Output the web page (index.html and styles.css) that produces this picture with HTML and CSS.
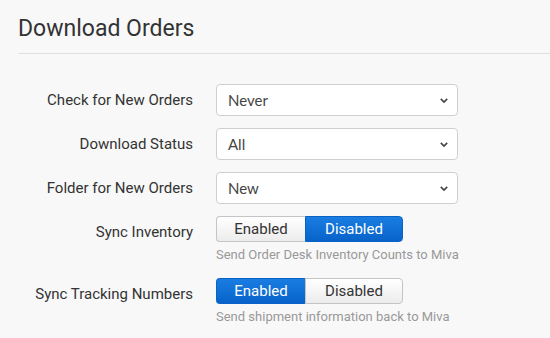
FILE: index.html
```html
<!DOCTYPE html>
<html lang="en">
<head>
<meta charset="UTF-8">
<title>Download Orders</title>
<link rel="stylesheet" href="styles.css">
</head>
<body>
<div class="panel">
	<h2 class="panel-title">Download Orders</h2>

	<div class="form-row">
		<label class="form-label">Check for New Orders</label>
		<div class="form-control">
			<div class="select-box"><span>Never</span><svg class="chevron" viewBox="0 0 10 6"><path d="M1 1l4 4 4-4" /></svg></div>
		</div>
	</div>

	<div class="form-row">
		<label class="form-label">Download Status</label>
		<div class="form-control">
			<div class="select-box"><span>All</span><svg class="chevron" viewBox="0 0 10 6"><path d="M1 1l4 4 4-4" /></svg></div>
		</div>
	</div>

	<div class="form-row">
		<label class="form-label">Folder for New Orders</label>
		<div class="form-control">
			<div class="select-box"><span>New</span><svg class="chevron" viewBox="0 0 10 6"><path d="M1 1l4 4 4-4" /></svg></div>
		</div>
	</div>

	<div class="form-row toggle-row">
		<label class="form-label">Sync Inventory</label>
		<div class="form-control">
			<div class="btn-group">
				<button class="btn">Enabled</button>
				<button class="btn active">Disabled</button>
			</div>
			<p class="help">Send Order Desk Inventory Counts to Miva</p>
		</div>
	</div>

	<div class="form-row toggle-row">
		<label class="form-label">Sync Tracking Numbers</label>
		<div class="form-control">
			<div class="btn-group">
				<button class="btn active">Enabled</button>
				<button class="btn">Disabled</button>
			</div>
			<p class="help">Send shipment information back to Miva</p>
		</div>
	</div>
</div>
</body>
</html>
```

FILE: styles.css
```css
body {
	margin: 0;
	background-color: #f8f8f8;
	font-family: Roboto, "Liberation Sans", Arial, sans-serif;
	color: #333;
}
.panel {
	padding: 14px 0 0 18px;
}
.panel-title {
	margin: 0;
	font-size: 23px;
	font-weight: 400;
	color: #333;
	line-height: 30px;
	padding-bottom: 9px;
	border-bottom: 1px solid #e0e0e0;
	margin-bottom: 30px;
}
.form-row {
	display: grid;
	grid-template-columns: 175px 242px;
	column-gap: 23px;
	margin-bottom: 12px;
}
.form-label {
	text-align: right;
	font-size: 15px;
	line-height: 32px;
	color: #333;
}
.select-box {
	height: 30px;
	border: 1px solid #cfcfcf;
	border-radius: 4px;
	background-color: #fff;
	display: flex;
	align-items: center;
	justify-content: space-between;
	padding: 0 9px 0 11px;
	font-family: Lato, "Liberation Sans", sans-serif;
	font-size: 15px;
	color: #444;
}
.chevron {
	width: 8px;
	height: 5px;
	fill: none;
	stroke: #444;
	stroke-width: 2;
}
.toggle-row {
	margin-bottom: 14px;
}
.toggle-row .form-label {
	line-height: 28px;
	padding-top: 2px;
}
.btn-group {
	display: flex;
	width: 187px;
	height: 26px;
}
.btn {
	flex: 1 1 0;
	margin: 0;
	padding: 0;
	font-family: Roboto, "Liberation Sans", Arial, sans-serif;
	font-size: 15px;
	color: #333;
	border: 1px solid #c4c4c4;
	background: linear-gradient(#fff, #ececec);
	cursor: pointer;
}
.btn:first-child {
	border-radius: 4px 0 0 4px;
	border-right: none;
	flex-basis: 89px;
	flex-grow: 0;
}
.btn:last-child {
	border-radius: 0 4px 4px 0;
}
.btn.active {
	color: #fff;
	border-color: #0a62c4;
	background: linear-gradient(#1a7de2, #0763c9);
}
.help {
	margin: 4px 0 0;
	font-size: 13px;
	color: #999;
	line-height: 18px;
	white-space: nowrap;
}
```
